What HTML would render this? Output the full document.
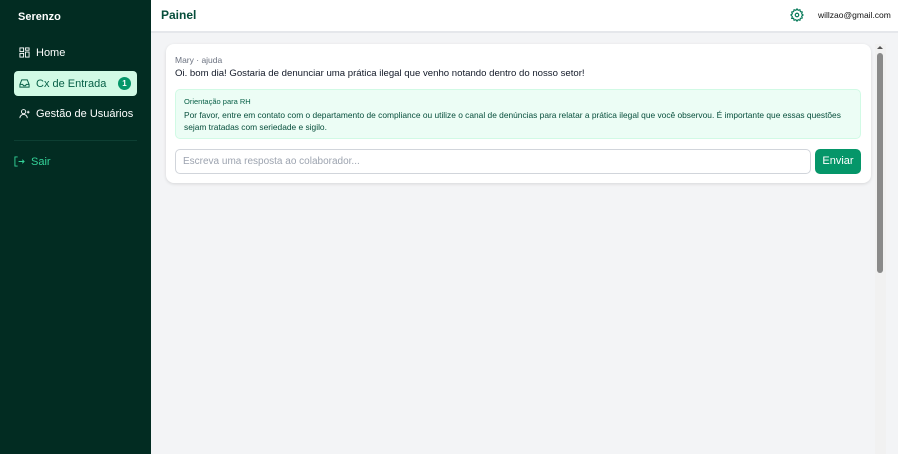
<!DOCTYPE html>
<html><head><meta charset="utf-8"><style>
*{box-sizing:border-box;margin:0;padding:0}
body{width:898px;height:454px;overflow:hidden;font-family:"Liberation Sans",sans-serif;background:#f3f4f6;position:relative}
.side{position:absolute;left:0;top:0;width:151px;height:454px;background:#022c22;color:#fff}
.brand{position:absolute;left:18px;top:11px;font-weight:bold;font-size:11px}
.item{position:absolute;left:14px;width:123px;height:25px;border-radius:4px;font-size:11px;display:flex;align-items:center;padding-left:5px;gap:6px;white-space:nowrap}
.item svg{width:11px;height:11px}
.act{background:#d1fae5;color:#065f46}
.badge{position:absolute;right:6px;top:6px;width:13px;height:13px;border-radius:7px;background:#059669;color:#fff;font-size:8px;font-weight:bold;text-align:center;line-height:13px}
.hr{position:absolute;left:14px;top:140px;width:123px;height:1px;background:#0d3f33}
.head{position:absolute;left:151px;top:0;right:0;height:33px;background:#fff;border-bottom:2px solid #e5e7eb}
.card{position:absolute;left:166px;top:44px;width:705px;height:139px;background:#fff;border-radius:8px;box-shadow:0 1px 3px rgba(0,0,0,.12)}
.sb{position:absolute;left:875px;top:44px;width:11px;height:410px;background:#f1f1f1}
.th{position:absolute;left:2px;top:9px;width:6px;height:220px;background:#8a8a8a;border-radius:3px}
</style></head><body>
<div class="side">
<div class="brand">Serenzo</div>
<div class="item" style="top:40px"><svg viewBox="0 0 12 12" fill="none" stroke="#fff" stroke-width="1"><rect x="1" y="1" width="4" height="4"/><rect x="7" y="1" width="4" height="2.5"/><rect x="7" y="5.5" width="4" height="5.5"/><rect x="1" y="7" width="4" height="4"/></svg>Home</div>
<div class="item act" style="top:71px"><svg viewBox="0 0 12 12" fill="none" stroke="#065f46" stroke-width="1.1"><path d="M1 7h3l1 1.5h2L8 7h3M1 7l2-5h6l2 5v3H1z"/></svg>Cx de Entrada<span class="badge">1</span></div>
<div class="item" style="top:101px"><svg viewBox="0 0 12 12" fill="none" stroke="#fff" stroke-width="1"><circle cx="5" cy="4" r="2.3"/><path d="M1 11c0-2.5 2-4 4-4s4 1.5 4 4M10 3v3M8.5 4.5h3"/></svg>Gestão de Usuários</div>
<div class="hr"></div>
<div class="item" style="top:149px;color:#34d399;padding-left:0"><svg viewBox="0 0 12 12" fill="none" stroke="#34d399" stroke-width="1"><path d="M4 1H1v10h3M5 6h6M9 4l2 2-2 2"/></svg>Sair</div>
</div>
<div class="head">
<div style="position:absolute;left:10px;top:8px;font-weight:bold;font-size:12px;color:#064e3b">Painel</div>
<svg style="position:absolute;left:639px;top:8px" width="14" height="14" viewBox="0 0 24 24" fill="none" stroke="#047857" stroke-width="2"><circle cx="12" cy="12" r="3"/><path d="M12 1.5l2 2.5 3-1 .8 3.2 3.2.8-1 3 2.5 2-2.5 2 1 3-3.2.8-.8 3.2-3-1-2 2.5-2-2.5-3 1-.8-3.2L3 17.8l1-3L1.5 12 4 10 3 7l3.2-.8L7 3l3 1z"/></svg>
<div style="position:absolute;left:667px;top:10px;font-size:8.5px;color:#111">willzao@gmail.com</div>
</div>
<div class="card">
<div style="position:absolute;left:9px;top:11px;font-size:8.5px;color:#6b7280">Mary · ajuda</div>
<div style="position:absolute;left:9px;top:24px;font-size:9.6px;color:#111827;white-space:nowrap">Oi. bom dia! Gostaria de denunciar uma prática ilegal que venho notando dentro do nosso setor!</div>
<div style="position:absolute;left:9px;top:45px;width:686px;height:50px;background:#ecfdf5;border:1px solid #d1fae5;border-radius:5px">
<div style="position:absolute;left:8px;top:7px;font-size:7.5px;color:#065f46">Orientação para RH</div>
<div style="position:absolute;left:8px;top:19px;width:670px;font-size:8.4px;line-height:12px;color:#064e3b">Por favor, entre em contato com o departamento de compliance ou utilize o canal de denúncias para relatar a prática ilegal que você observou. É importante que essas questões sejam tratadas com seriedade e sigilo.</div>
</div>
<div style="position:absolute;left:9px;top:105px;width:636px;height:25px;border:1px solid #d1d5db;border-radius:5px;font-size:10px;color:#9ca3af;padding:6px 7px">Escreva uma resposta ao colaborador...</div>
<div style="position:absolute;left:649px;top:105px;width:46px;height:25px;background:#059669;border-radius:5px;color:#fff;font-size:11px;text-align:center;line-height:25px">Enviar</div>
</div>
<div class="sb"><div style="position:absolute;left:2px;top:2px;border:3px solid transparent;border-bottom:3px solid #555;border-top:0"></div><div class="th"></div></div>
</body></html>
